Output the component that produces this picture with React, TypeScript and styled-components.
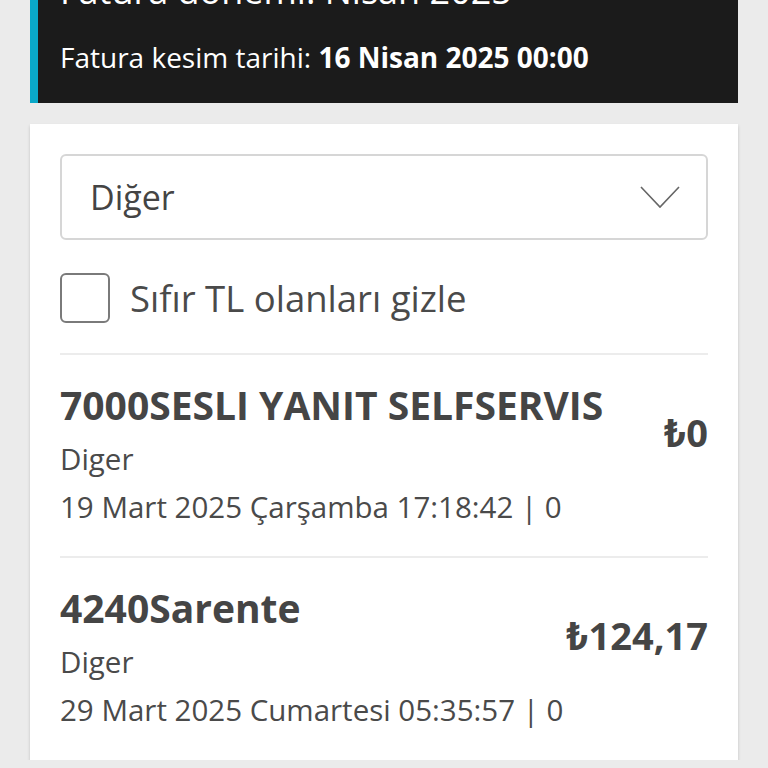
import React from "react";
import styled, { createGlobalStyle } from "styled-components";

const Global = createGlobalStyle`
  html, body { margin: 0; padding: 0; }
  body {
    background: #ebebeb;
    font-family: "Open Sans", Roboto, sans-serif;
    font-stretch: 100%;
    color: #4a4a4a;
    overflow: hidden;
  }
`;

const Page = styled.div`
  display: flex;
  flex-direction: column;
  gap: 21px;
  padding: 0 30px;
  margin-top: -33px;
`;

const Banner = styled.div`
  background: #1b1b1b;
  border-left: 8px solid #0aa8c8;
  padding: 0 22px 26px 22px;
  color: #ffffff;
  font-stretch: 90%;
`;

const BannerTitle = styled.div`
  font-size: 36px;
  line-height: 48px;
  white-space: nowrap;
`;

const BannerLine = styled.div`
  font-size: 28px;
  line-height: 40px;
  margin-top: 22px;
  white-space: nowrap;
  b { font-weight: 700; }
`;

const Card = styled.div`
  background: #ffffff;
  box-shadow: 0 2px 3px rgba(0, 0, 0, 0.18);
  padding: 30px 30px 1px 30px;
`;

const Select = styled.div`
  height: 86px;
  box-sizing: border-box;
  border: 2px solid #d6d6d6;
  border-radius: 6px;
  display: flex;
  align-items: center;
  justify-content: space-between;
  padding: 0 26px 0 28px;
  font-size: 34px;
  color: #444;
`;

const CheckRow = styled.label`
  display: flex;
  align-items: center;
  gap: 20px;
  margin-top: 33px;
  font-size: 36.5px;
  color: #4a4a4a;
`;

const Box = styled.span`
  width: 50px;
  height: 50px;
  box-sizing: border-box;
  border: 2px solid #7a7a7a;
  border-radius: 6px;
  flex: none;
`;

const List = styled.div`
  margin-top: 30px;
`;

const Row = styled.div`
  border-top: 2px solid #ececec;
  padding: 24px 0 25px 0;
  display: flex;
  justify-content: space-between;
  align-items: flex-start;
  gap: 12px;
`;

const Info = styled.div`
  display: flex;
  flex-direction: column;
  min-width: 0;
`;

const Title = styled.div`
  font-size: 39px;
  line-height: 52px;
  font-weight: 700;
  color: #454545;
  white-space: nowrap;
  margin-bottom: 4px;
`;

const Meta = styled.div`
  font-size: 29.5px;
  line-height: 48px;
  color: #4a4a4a;
  white-space: nowrap;
`;

const Amount = styled.div`
  font-size: 38px;
  line-height: 52px;
  font-weight: 700;
  color: #454545;
  margin-top: 27px;
  white-space: nowrap;
`;

const Chevron = () => (
  <svg width="40" height="24" viewBox="0 0 40 24" fill="none">
    <path d="M1 2 L20 22 L39 2" stroke="#666" strokeWidth="1.6" />
  </svg>
);

const rows = [
  { title: "7000SESLI YANIT SELFSERVIS", type: "Diger", date: "19 Mart 2025 Çarşamba 17:18:42 | 0", amount: "₺0" },
  { title: "4240Sarente", type: "Diger", date: "29 Mart 2025 Cumartesi 05:35:57 | 0", amount: "₺124,17" },
];

export default function App() {
  return (
    <>
      <Global />
      <Page>
        <Banner>
          <BannerTitle>Fatura dönemi: Nisan 2025</BannerTitle>
          <BannerLine>
            Fatura kesim tarihi: <b>16 Nisan 2025 00:00</b>
          </BannerLine>
        </Banner>
        <Card>
          <Select>
            <span>Diğer</span>
            <Chevron />
          </Select>
          <CheckRow>
            <Box />
            <span>Sıfır TL olanları gizle</span>
          </CheckRow>
          <List>
            {rows.map((r) => (
              <Row key={r.title}>
                <Info>
                  <Title>{r.title}</Title>
                  <Meta>{r.type}</Meta>
                  <Meta>{r.date}</Meta>
                </Info>
                <Amount>{r.amount}</Amount>
              </Row>
            ))}
          </List>
        </Card>
      </Page>
    </>
  );
}
